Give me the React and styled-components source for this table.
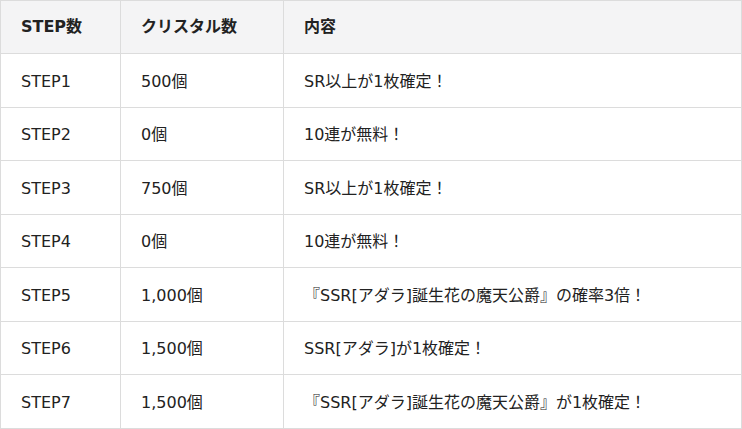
import React from 'react'
import styled, { createGlobalStyle } from 'styled-components'

const GlobalStyle = createGlobalStyle`
  html, body {
    margin: 0;
    padding: 0;
    background: #fff;
  }
  body {
    font-family: "DejaVu Sans", "Noto Sans CJK JP", sans-serif;
    color: #222;
  }
`

const Table = styled.table`
  width: 742px;
  border-collapse: collapse;
  table-layout: fixed;
  font-size: 16px;
  line-height: 24px;
`

const Col = styled.col`
  width: ${p => p.$w || 'auto'};
`

const HeadCell = styled.th`
  box-sizing: border-box;
  background: #f4f4f5;
  font-weight: bold;
  text-align: left;
  padding: 0 20px;
  height: 53px;
  border: 1px solid #dcdcdc;
`

const Cell = styled.td`
  box-sizing: border-box;
  padding: 3px 20px 0;
  height: 53.5px;
  border: 1px solid #dcdcdc;
  white-space: nowrap;
`

const rows = [
  ['STEP1', '500個', 'SR以上が1枚確定！'],
  ['STEP2', '0個', '10連が無料！'],
  ['STEP3', '750個', 'SR以上が1枚確定！'],
  ['STEP4', '0個', '10連が無料！'],
  ['STEP5', '1,000個', '『SSR[アダラ]誕生花の魔天公爵』の確率3倍！'],
  ['STEP6', '1,500個', 'SSR[アダラ]が1枚確定！'],
  ['STEP7', '1,500個', '『SSR[アダラ]誕生花の魔天公爵』が1枚確定！'],
]

export default function App() {
  return (
    <>
      <GlobalStyle />
      <Table>
        <colgroup>
          <Col $w="120px" />
          <Col $w="163px" />
          <Col />
        </colgroup>
        <thead>
          <tr>
            <HeadCell>STEP数</HeadCell>
            <HeadCell>クリスタル数</HeadCell>
            <HeadCell>内容</HeadCell>
          </tr>
        </thead>
        <tbody>
          {rows.map(r => (
            <tr key={r[0]}>
              {r.map((c, i) => (
                <Cell key={i}>{c}</Cell>
              ))}
            </tr>
          ))}
        </tbody>
      </Table>
    </>
  )
}
